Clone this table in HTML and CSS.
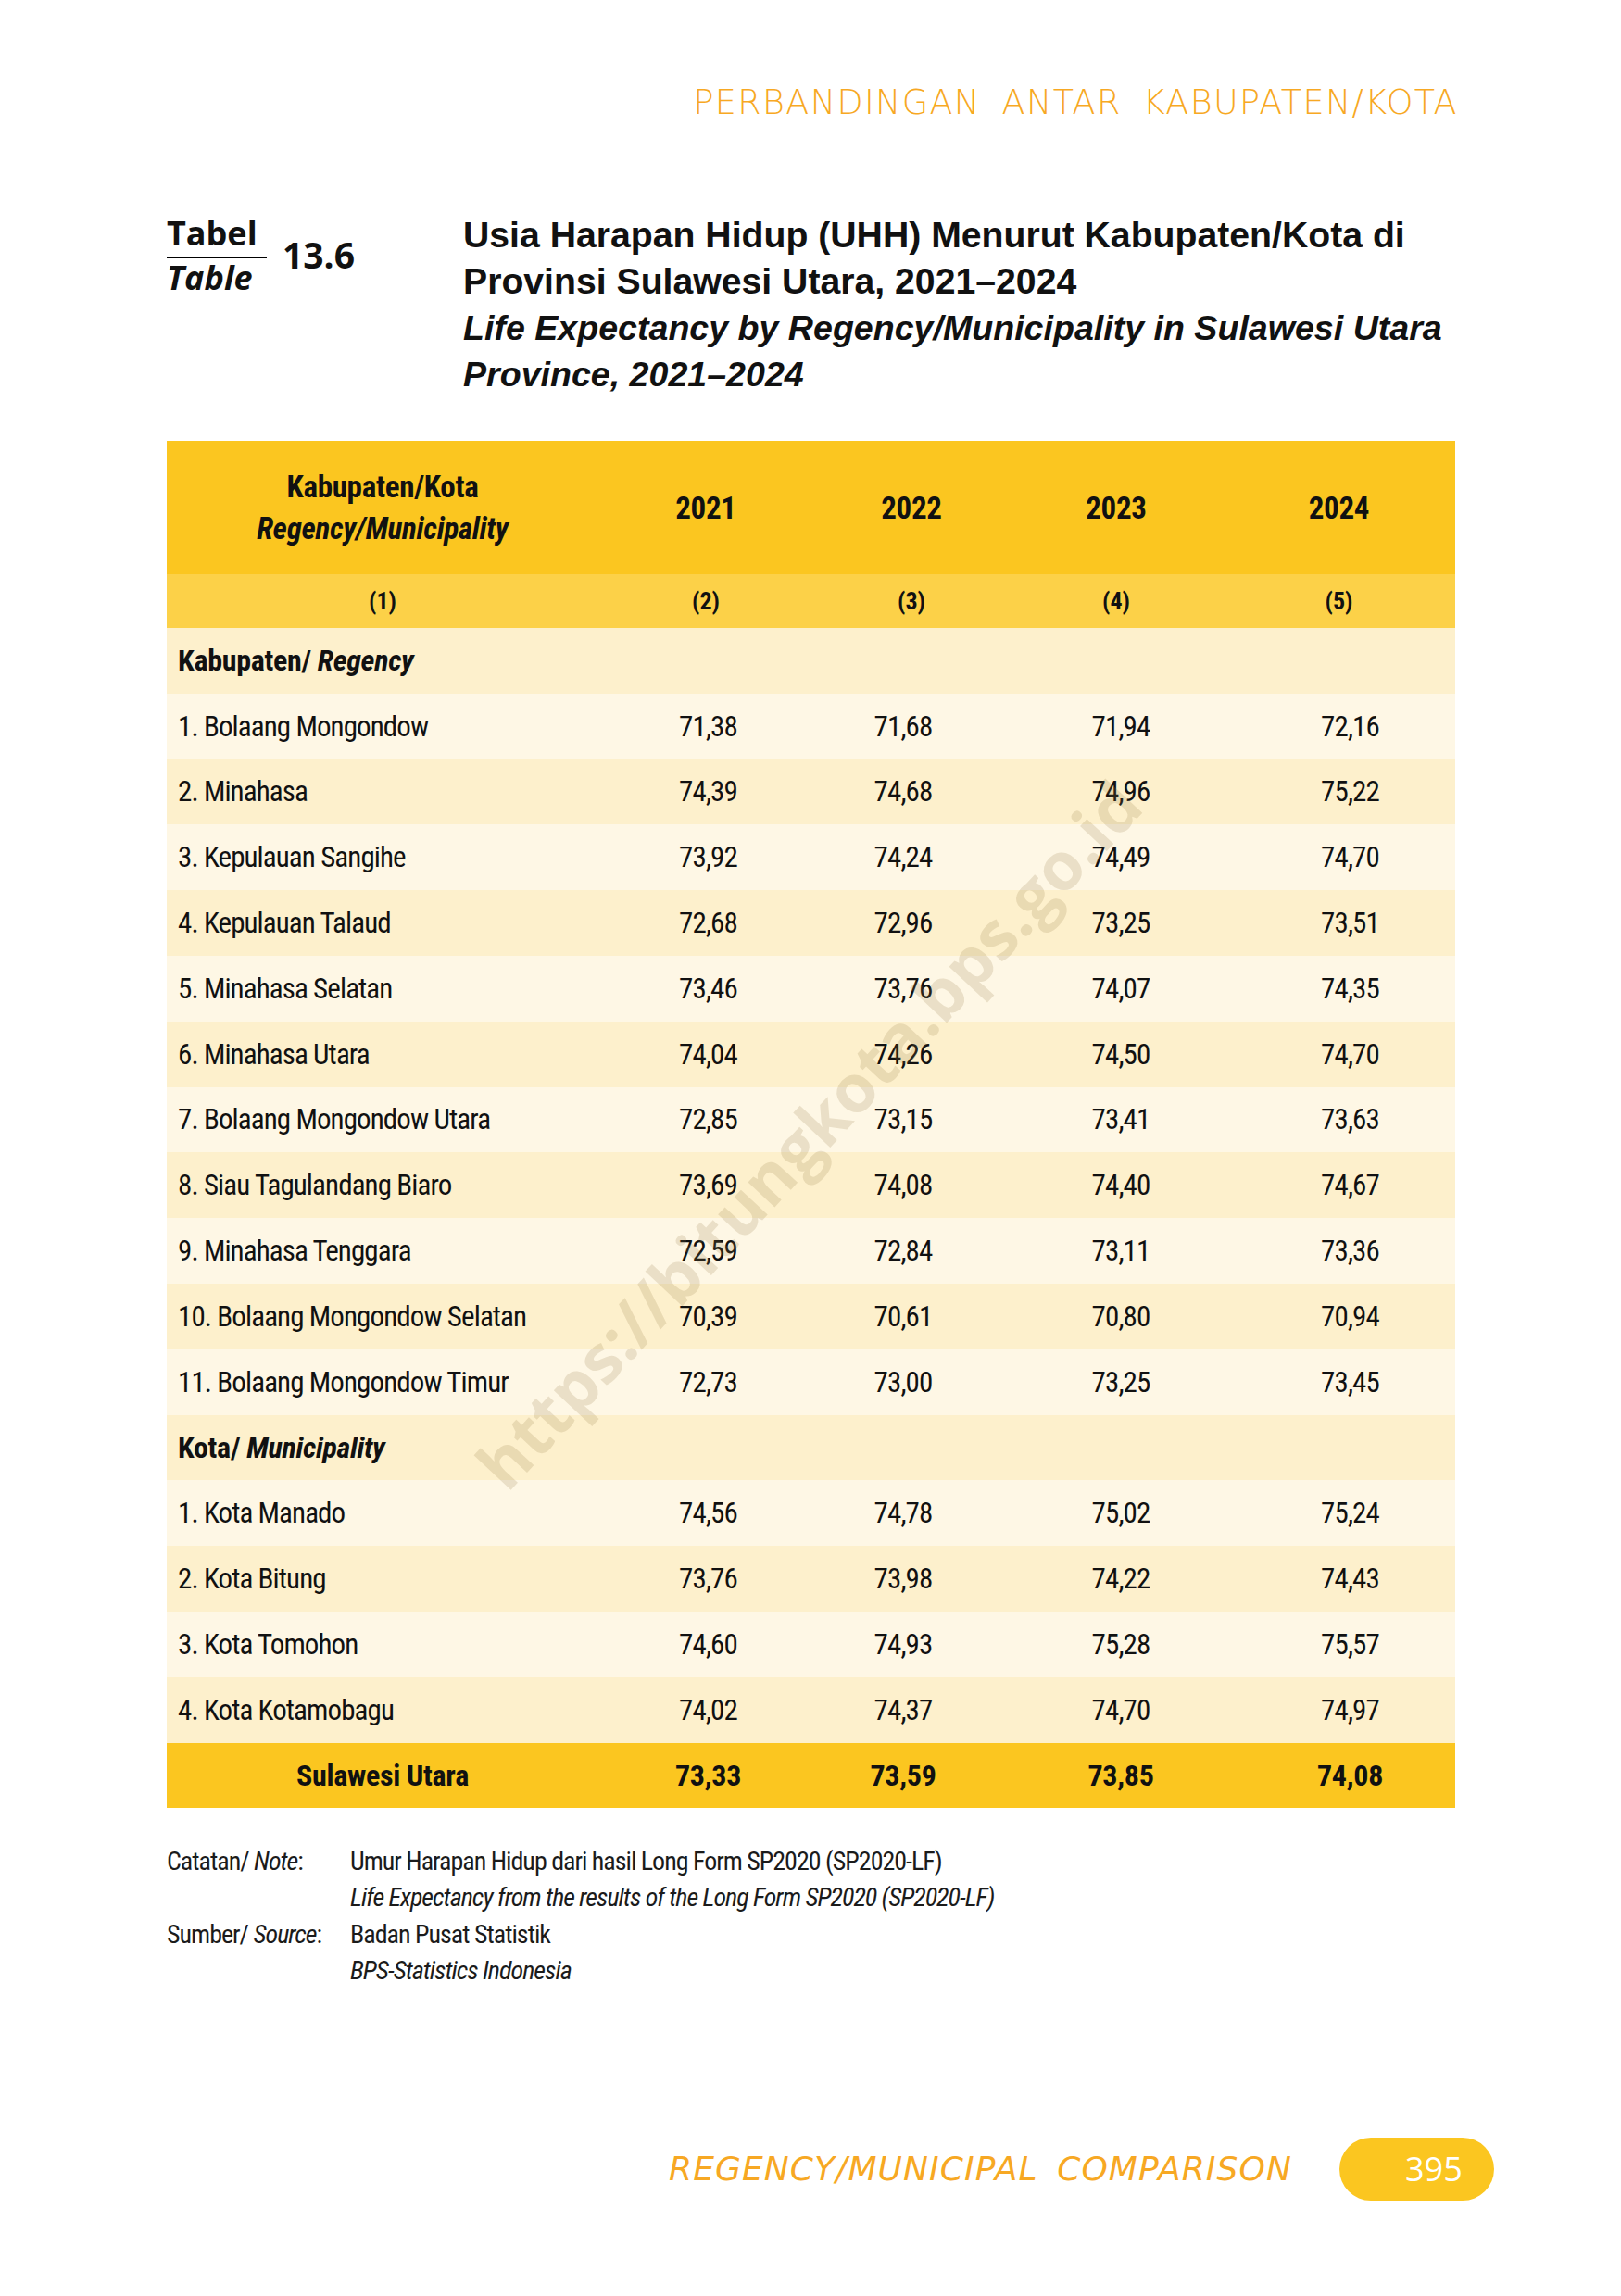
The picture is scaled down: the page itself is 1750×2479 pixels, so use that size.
FILE: index.html
```html
<!DOCTYPE html>
<html lang="id">
<head>
<meta charset="utf-8">
<title>Tabel 13.6</title>
<link rel="stylesheet" href="styles.css">
</head>
<body>
<div class="page">
  <div class="running-head">PERBANDINGAN ANTAR KABUPATEN/KOTA</div>

  <div class="title-block">
    <div class="tbl-label">
      <div class="tbl-word">
        <div class="tbl-id">Tabel</div>
        <div class="tbl-en">Table</div>
      </div>
      <div class="tbl-num">13.6</div>
    </div>
    <div class="title">
      <div>Usia Harapan Hidup (UHH) Menurut Kabupaten/Kota di</div>
      <div>Provinsi Sulawesi Utara, 2021–2024</div>
      <div class="en">Life Expectancy by Regency/Municipality in Sulawesi Utara</div>
      <div class="en">Province, 2021–2024</div>
    </div>
  </div>

  <table class="data">
    <colgroup>
      <col class="w1"><col class="w2"><col class="w3"><col class="w4"><col class="w5">
    </colgroup>
    <thead>
      <tr class="head">
        <th>Kabupaten/Kota<br><em>Regency/Municipality</em></th>
        <th>2021</th><th>2022</th><th>2023</th><th>2024</th>
      </tr>
      <tr class="sub">
        <th>(1)</th><th>(2)</th><th>(3)</th><th>(4)</th><th>(5)</th>
      </tr>
    </thead>
    <tbody>
      <tr class="sec"><td class="name">Kabupaten/ <em>Regency</em></td><td></td><td></td><td></td><td></td></tr>
      <tr><td class="name">1. Bolaang Mongondow</td><td class="c2">71,38</td><td class="c3">71,68</td><td class="c4">71,94</td><td class="c5">72,16</td></tr>
      <tr><td class="name">2. Minahasa</td><td class="c2">74,39</td><td class="c3">74,68</td><td class="c4">74,96</td><td class="c5">75,22</td></tr>
      <tr><td class="name">3. Kepulauan Sangihe</td><td class="c2">73,92</td><td class="c3">74,24</td><td class="c4">74,49</td><td class="c5">74,70</td></tr>
      <tr><td class="name">4. Kepulauan Talaud</td><td class="c2">72,68</td><td class="c3">72,96</td><td class="c4">73,25</td><td class="c5">73,51</td></tr>
      <tr><td class="name">5. Minahasa Selatan</td><td class="c2">73,46</td><td class="c3">73,76</td><td class="c4">74,07</td><td class="c5">74,35</td></tr>
      <tr><td class="name">6. Minahasa Utara</td><td class="c2">74,04</td><td class="c3">74,26</td><td class="c4">74,50</td><td class="c5">74,70</td></tr>
      <tr><td class="name">7. Bolaang Mongondow Utara</td><td class="c2">72,85</td><td class="c3">73,15</td><td class="c4">73,41</td><td class="c5">73,63</td></tr>
      <tr><td class="name">8. Siau Tagulandang Biaro</td><td class="c2">73,69</td><td class="c3">74,08</td><td class="c4">74,40</td><td class="c5">74,67</td></tr>
      <tr><td class="name">9. Minahasa Tenggara</td><td class="c2">72,59</td><td class="c3">72,84</td><td class="c4">73,11</td><td class="c5">73,36</td></tr>
      <tr><td class="name">10. Bolaang Mongondow Selatan</td><td class="c2">70,39</td><td class="c3">70,61</td><td class="c4">70,80</td><td class="c5">70,94</td></tr>
      <tr><td class="name">11. Bolaang Mongondow Timur</td><td class="c2">72,73</td><td class="c3">73,00</td><td class="c4">73,25</td><td class="c5">73,45</td></tr>
      <tr class="sec"><td class="name">Kota/ <em>Municipality</em></td><td></td><td></td><td></td><td></td></tr>
      <tr><td class="name">1. Kota Manado</td><td class="c2">74,56</td><td class="c3">74,78</td><td class="c4">75,02</td><td class="c5">75,24</td></tr>
      <tr><td class="name">2. Kota Bitung</td><td class="c2">73,76</td><td class="c3">73,98</td><td class="c4">74,22</td><td class="c5">74,43</td></tr>
      <tr><td class="name">3. Kota Tomohon</td><td class="c2">74,60</td><td class="c3">74,93</td><td class="c4">75,28</td><td class="c5">75,57</td></tr>
      <tr><td class="name">4. Kota Kotamobagu</td><td class="c2">74,02</td><td class="c3">74,37</td><td class="c4">74,70</td><td class="c5">74,97</td></tr>
    </tbody>
    <tfoot>
      <tr class="total"><td class="tname">Sulawesi Utara</td><td class="c2">73,33</td><td class="c3">73,59</td><td class="c4">73,85</td><td class="c5">74,08</td></tr>
    </tfoot>
  </table>

  <div class="notes">
    <div class="nlabel">Catatan/ <em>Note</em>:</div>
    <div>Umur Harapan Hidup dari hasil Long Form SP2020 (SP2020-LF)</div>
    <div></div>
    <div><em>Life Expectancy from the results of the Long Form SP2020 (SP2020-LF)</em></div>
    <div class="nlabel">Sumber/ <em>Source</em>:</div>
    <div>Badan Pusat Statistik</div>
    <div></div>
    <div><em>BPS-Statistics Indonesia</em></div>
  </div>

  <div class="footer">
    <div class="foot-text">REGENCY/MUNICIPAL COMPARISON</div>
    <div class="pill">395</div>
  </div>

  <div class="watermark">https://bitungkota.bps.go.id</div>
</div>
</body>
</html>
```

FILE: styles.css
```css
body {
  margin: 0;
  background: #ffffff;
}

.page {
  position: relative;
  width: 1750px;
  height: 2479px;
  box-sizing: border-box;
  padding: 0 179px 0 180px;
  display: flex;
  flex-direction: column;
  overflow: hidden;
  color: #111111;
}

.running-head {
  margin-top: 91px;
  margin-right: -3px;
  text-align: right;
  font-family: "DejaVu Sans", sans-serif;
  font-weight: 200;
  font-size: 36.5px;
  line-height: 40px;
  letter-spacing: 1.4px;
  word-spacing: 10px;
  color: #F7A823;
}

.title-block {
  margin-top: 98px;
  display: flex;
}

.tbl-label {
  width: 320px;
  flex: none;
  display: flex;
  align-items: flex-start;
}

.tbl-word {
  display: flex;
  flex-direction: column;
  margin-top: 4px;
}

.tbl-id {
  width: 108px;
  font-family: "Open Sans", sans-serif;
  font-weight: 700;
  font-size: 36px;
  line-height: 38px;
  padding-bottom: 6px;
  border-bottom: 2px solid #000;
}

.tbl-en {
  margin-top: 2px;
  font-family: "Open Sans", sans-serif;
  font-weight: 700;
  font-style: italic;
  font-size: 36px;
  line-height: 38px;
}

.tbl-num {
  margin-left: 17px;
  margin-top: 24px;
  font-family: "Open Sans", sans-serif;
  font-weight: 700;
  font-size: 39px;
  line-height: 44px;
}

.title {
  font-family: "Liberation Sans", Arial, sans-serif;
  font-weight: 700;
  font-size: 39.2px;
  line-height: 50px;
  white-space: nowrap;
}

.title .en {
  font-style: italic;
  font-size: 37.6px;
}

/* table */
.data {
  margin-top: 47px;
  width: 1391px;
  border-collapse: collapse;
  table-layout: fixed;
  font-family: "Roboto Condensed", "Open Sans", sans-serif;
  font-stretch: 75%;
  font-size: 31px;
  letter-spacing: -0.9px;
  color: #111111;
}

.w1 { width: 466px; }
.w2 { width: 232px; }
.w3 { width: 212px; }
.w4 { width: 230px; }
.w5 { width: 251px; }

.data th,
.data td {
  padding: 0;
  text-align: center;
  vertical-align: middle;
}

.head th {
  height: 144px;
  background: #FBC620;
  font-weight: 700;
  font-size: 33px;
  letter-spacing: -0.3px;
  line-height: 45px;
}

.head em {
  font-style: italic;
}

.sub th {
  height: 58px;
  background: #FCD148;
  font-weight: 700;
  font-size: 26px;
  letter-spacing: 0;
}

.data tbody td {
  height: 70.8px;
}

.data tbody tr:nth-child(odd) {
  background: #FDF0CC;
}

.data tbody tr:nth-child(even) {
  background: #FEF7E5;
}

.data td.name {
  text-align: left;
  padding-left: 12px;
  white-space: nowrap;
}

.sec td {
  font-weight: 700;
  font-size: 32px;
  letter-spacing: -0.3px;
}

.c2 { padding-left: 5px !important; }
.c3 { padding-right: 18px !important; }
.c4 { padding-left: 10px !important; }
.c5 { padding-left: 24px !important; }

.total td {
  height: 70px;
  background: #FBC620;
  font-weight: 700;
  font-size: 32px;
  letter-spacing: -0.3px;
}

.total td.tname {
  text-align: center;
}

/* notes */
.notes {
  margin-top: 38px;
  display: grid;
  grid-template-columns: 198px auto;
  font-family: "Roboto Condensed", sans-serif;
  font-size: 28px;
  line-height: 39.5px;
  letter-spacing: -1px;
  color: #1b1b1b;
}

.nlabel {
  white-space: nowrap;
}

/* footer */
.footer {
  margin-top: 160px;
  margin-right: -42px;
  display: flex;
  justify-content: flex-end;
  align-items: center;
}

.foot-text {
  margin-right: 51px;
  font-family: "DejaVu Sans", sans-serif;
  font-weight: 200;
  font-style: italic;
  font-size: 36px;
  letter-spacing: 1.1px;
  word-spacing: 8px;
  color: #F7A823;
}

.pill {
  width: 167px;
  height: 68px;
  box-sizing: border-box;
  padding-left: 71px;
  border-radius: 34px;
  background: #FBC620;
  color: #ffffff;
  font-family: "Open Sans", sans-serif;
  font-size: 36px;
  line-height: 68px;
}

.watermark {
  position: absolute;
  left: 872px;
  top: 1224px;
  transform: translate(-50%, -50%) rotate(-47deg);
  white-space: nowrap;
  font-family: "Open Sans", sans-serif;
  font-weight: 700;
  font-size: 72px;
  color: rgba(150, 120, 70, 0.19);
  pointer-events: none;
}
```
